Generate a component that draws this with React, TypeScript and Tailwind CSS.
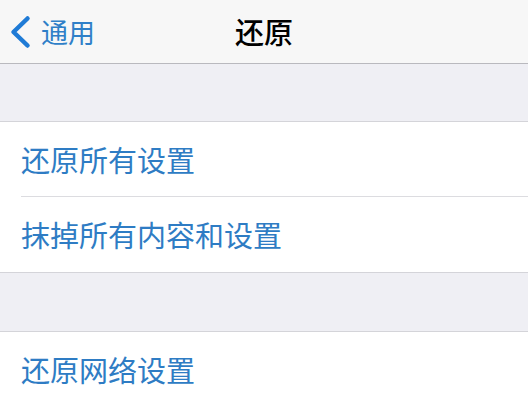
const font = { fontFamily: '"Noto Sans CJK SC", "Noto Sans", sans-serif' }

function Row({ label, divider }: { label: string; divider?: boolean }) {
  return (
    <div className="bg-white pl-[21px]">
      <div className={`flex h-[75px] items-center ${divider ? 'border-b border-[#dcdce0]' : ''}`}>
        <span className="text-[29px] leading-none text-[#2e7cc4]">{label}</span>
      </div>
    </div>
  )
}

export default function App() {
  return (
    <div className="h-[403px] w-[528px] overflow-hidden bg-[#efeff4]" style={font}>
      {/* nav bar */}
      <header className="relative flex h-[64px] items-center border-b border-[#b9b9be] bg-[#f7f7f7]">
        <button className="flex items-center pl-[8px] text-[#2f7fc8]">
          <svg width="24" height="34" viewBox="0 0 24 34" fill="none">
            <path d="M19.5 3.5 L5.5 17 L19.5 30.5" stroke="#1f7bd6" strokeWidth="4.5" strokeLinecap="round" strokeLinejoin="round" />
          </svg>
          <span className="ml-[9px] text-[27px] leading-none">通用</span>
        </button>
        <h1 className="absolute left-[235px] text-[29px] font-medium leading-none text-black">还原</h1>
      </header>

      <div className="h-[58px] border-b border-[#d4d4d9]" />
      <Row label="还原所有设置" divider />
      <Row label="抹掉所有内容和设置" />
      <div className="h-[60px] border-y border-[#d4d4d9]" />
      <Row label="还原网络设置" />
    </div>
  )
}
